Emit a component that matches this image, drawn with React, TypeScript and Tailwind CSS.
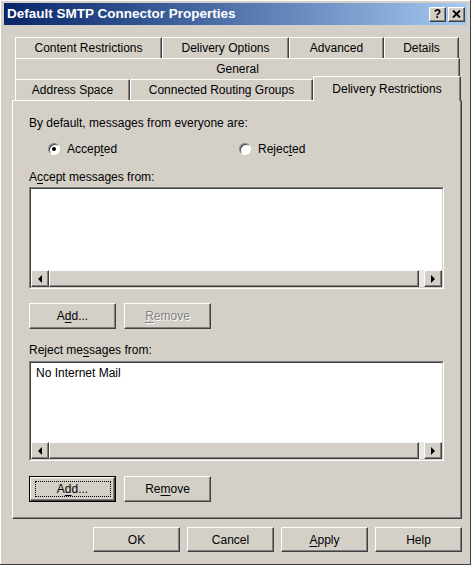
import React from "react";

const raised =
  "border-t border-l border-t-white border-l-white border-r border-b border-r-[#404040] border-b-[#404040] shadow-[inset_-1px_-1px_0_#808080] bg-[#d4d0c8]";

function Btn({
  children,
  h26,
  focused,
}: {
  children: React.ReactNode;
  h26?: boolean;
  focused?: boolean;
}) {
  if (focused) {
    return (
      <div className="w-[87px] h-[26px] border border-black flex">
        <div className={`flex-1 flex items-center justify-center ${raised}`}>
          <div className="w-[76px] h-[16px] border border-dotted border-black flex items-center justify-center leading-[14px]">
            {children}
          </div>
        </div>
      </div>
    );
  }
  return (
    <div
      className={`w-[87px] ${h26 ? "h-[26px]" : "h-[25px]"} flex items-center justify-center leading-[14px] ${raised}`}
    >
      {children}
    </div>
  );
}

function Radio({ checked }: { checked?: boolean }) {
  return (
    <div className="w-[12px] h-[12px] rounded-full bg-white border border-t-[#808080] border-l-[#808080] border-r-white border-b-white shadow-[inset_1px_1px_0_#404040] flex items-center justify-center">
      {checked ? <div className="w-[4px] h-[4px] rounded-full bg-black" /> : null}
    </div>
  );
}

function ArrowBtn({ dir }: { dir: "left" | "right" }) {
  return (
    <div className={`w-[18px] h-full flex items-center justify-center ${raised}`}>
      <svg width="5" height="8" viewBox="0 0 5 8">
        {dir === "left" ? (
          <polygon points="4,0 4,8 0,4" fill="#000" />
        ) : (
          <polygon points="0,0 0,8 4,4" fill="#000" />
        )}
      </svg>
    </div>
  );
}

function ListBox({ h, children }: { h: string; children?: React.ReactNode }) {
  return (
    <div
      className={`${h} w-[415px] flex flex-col border border-t-[#808080] border-l-[#808080] border-r-white border-b-white`}
    >
      <div className="flex-1 flex flex-col border border-t-[#404040] border-l-[#404040] border-r-[#d4d0c8] border-b-[#d4d0c8] bg-white">
        <div className="flex-1 pl-[5px] pt-[3px] leading-[14px]">{children}</div>
        <div className="h-[17px] flex bg-[#e9e7e3]">
          <ArrowBtn dir="left" />
          <div className={`flex-1 ${raised}`} />
          <div className="w-[5px]" />
          <ArrowBtn dir="right" />
        </div>
      </div>
    </div>
  );
}

const tab =
  "h-full flex items-center justify-center border-t border-l border-t-white border-l-white border-r border-r-[#404040] shadow-[inset_-1px_0_0_#808080] bg-[#d4d0c8] leading-[14px]";

export default function App() {
  return (
    <div className="w-[471px] h-[565px] bg-[#d4d0c8] text-[12px] text-black font-['Liberation_Sans',Arial,sans-serif] border-r border-b border-r-[#404040] border-b-[#404040] flex flex-col overflow-hidden">
      <div className="flex-1 border-t border-l border-t-white border-l-white flex flex-col">
        {/* title bar */}
        <div className="mt-[2px] ml-[3px] mr-[3px] h-[22px] bg-gradient-to-r from-[#0a246a] to-[#a6caf0] flex items-center pl-[3px] pr-[2px]">
          <div className="flex-1 text-white font-bold text-[13.5px] leading-[16px]">
            Default SMTP Connector Properties
          </div>
          <div className={`w-[17px] h-[15px] flex items-center justify-center font-bold text-[12px] leading-[12px] ${raised}`}>
            ?
          </div>
          <div className={`ml-[2px] w-[17px] h-[15px] flex items-center justify-center ${raised}`}>
            <svg width="9" height="8" viewBox="0 0 9 8">
              <path d="M1 0.5 L8 7.5 M8 0.5 L1 7.5" stroke="#000" strokeWidth="1.8" />
            </svg>
          </div>
        </div>

        {/* tabs + panel */}
        <div className="mt-[12px] pl-[11px] pr-[8px] flex flex-col">
          <div className="pl-[3px] pr-[2px] flex flex-col">
            <div className="h-[21px] flex">
              <div className={`w-[147px] ${tab}`}>Content Restrictions</div>
              <div className={`w-[127px] ${tab}`}>Delivery Options</div>
              <div className={`w-[95px] ${tab}`}>Advanced</div>
              <div className={`w-[75px] ${tab}`}>Details</div>
            </div>
            <div className="h-[21px] flex">
              <div className={`flex-1 ${tab}`}>General</div>
            </div>
          </div>
          <div className="h-[21px] flex items-end pl-[3px]">
            <div className={`w-[115px] ${tab}`}>Address Space</div>
            <div className={`w-[183px] ${tab}`}>Connected Routing Groups</div>
            <div className="relative z-10 w-[148px] h-[25px] mb-[-1px] flex items-start justify-center pt-[5px] border-t border-l border-t-white border-l-white border-r border-r-[#404040] shadow-[inset_-1px_0_0_#808080] bg-[#d4d0c8] leading-[14px]">
              Delivery Restrictions
            </div>
          </div>

          {/* panel */}
          <div className="border-t border-l border-t-white border-l-white border-r border-b border-r-[#404040] border-b-[#404040] shadow-[inset_-1px_-1px_0_#808080] pl-[16px] pb-[16px] flex flex-col">
            <div className="mt-[15px] h-[14px] leading-[14px]">By default, messages from everyone are:</div>
            <div className="mt-[12px] h-[14px] flex items-center">
              <div className="ml-[19px] w-[12px] h-[12px]">
                <Radio checked />
              </div>
              <div className="ml-[7px] w-[172px] leading-[14px]">
                Accep<span className="underline underline-offset-2">t</span>ed
              </div>
              <Radio />
              <div className="ml-[7px] leading-[14px]">
                Rejec<span className="underline underline-offset-2">t</span>ed
              </div>
            </div>
            <div className="mt-[14px] h-[14px] leading-[14px]">
              A<span className="underline underline-offset-2">c</span>cept messages from:
            </div>
            <div className="mt-[3px]">
              <ListBox h="h-[102px]" />
            </div>
            <div className="mt-[14px] flex gap-[8px]">
              <Btn h26>
                <span>
                  A<span className="underline underline-offset-2">d</span>d...
                </span>
              </Btn>
              <Btn h26>
                <span className="text-[#808080] [text-shadow:1px_1px_0_#ffffff]">
                  <span className="underline underline-offset-2">R</span>emove
                </span>
              </Btn>
            </div>
            <div className="mt-[14px] h-[14px] leading-[14px]">
              Reject me<span className="underline underline-offset-2">s</span>sages from:
            </div>
            <div className="mt-[4px]">
              <ListBox h="h-[100px]">No Internet Mail</ListBox>
            </div>
            <div className="mt-[15px] flex gap-[8px]">
              <Btn focused>
                <span>
                  A<span className="underline underline-offset-2">d</span>d...
                </span>
              </Btn>
              <Btn h26>
                <span>
                  Re<span className="underline underline-offset-2">m</span>ove
                </span>
              </Btn>
            </div>
          </div>

          {/* bottom buttons */}
          <div className="mt-[8px] flex justify-end gap-[7px]">
            <Btn>OK</Btn>
            <Btn>Cancel</Btn>
            <Btn>
              <span>
                <span className="underline underline-offset-2">A</span>pply
              </span>
            </Btn>
            <Btn>Help</Btn>
          </div>
        </div>
      </div>
    </div>
  );
}
